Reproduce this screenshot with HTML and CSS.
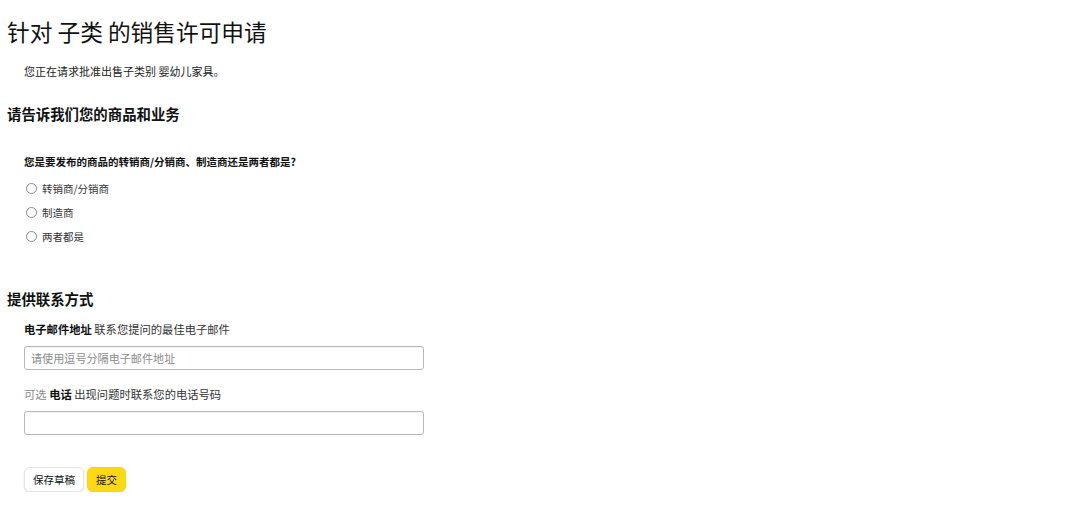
FILE: index.html
```html
<!DOCTYPE html>
<html lang="zh-CN">
<head>
<meta charset="utf-8">
<title>针对 子类 的销售许可申请</title>
<link rel="stylesheet" href="styles.css">
</head>
<body>
<main class="page">
  <h1 class="title">针对 子类 的销售许可申请</h1>
  <p class="intro">您正在请求批准出售子类别 婴幼儿家具。</p>

  <h2 class="section-title s1">请告诉我们您的商品和业务</h2>
  <div class="question">
    <p class="q-label">您是要发布的商品的转销商/分销商、制造商还是两者都是?</p>
    <label class="radio-row"><span class="radio"></span><span>转销商/分销商</span></label>
    <label class="radio-row"><span class="radio"></span><span>制造商</span></label>
    <label class="radio-row"><span class="radio"></span><span>两者都是</span></label>
  </div>

  <h2 class="section-title s2">提供联系方式</h2>
  <div class="field">
    <p class="f-label"><b>电子邮件地址</b> 联系您提问的最佳电子邮件</p>
    <div class="input"><span class="placeholder">请使用逗号分隔电子邮件地址</span></div>
  </div>
  <div class="field f2">
    <p class="f-label"><span class="muted">可选</span> <b>电话</b> 出现问题时联系您的电话号码</p>
    <div class="input"></div>
  </div>

  <div class="actions">
    <button class="btn btn-secondary">保存草稿</button>
    <button class="btn btn-primary">提交</button>
  </div>
</main>
</body>
</html>
```

FILE: styles.css
```css
* { box-sizing: border-box; }
html, body { margin: 0; padding: 0; background: #ffffff; }
body {
  font-family: "Noto Sans CJK SC", "Noto Sans", "Liberation Sans", sans-serif;
  color: #0f1111;
}
.page { padding: 18px 0 0 0; }
p, h1, h2 { margin: 0; }

.title {
  font-size: 22.7px;
  line-height: 27px;
  font-weight: 400;
  padding-left: 7px;
  color: #111;
}
.intro {
  margin-top: 18px;
  padding-left: 24px;
  font-size: 11px;
  line-height: 16px;
  color: #222;
}
.section-title {
  font-size: 14.4px;
  line-height: 20px;
  font-weight: 700;
  padding-left: 7px;
}
.s1 { margin-top: 25px; }
.s2 { margin-top: 41px; }

.question { padding-left: 24px; margin-top: 30px; }
.q-label {
  font-size: 10.5px;
  line-height: 16px;
  font-weight: 700;
  margin-bottom: 6px;
}
.radio-row {
  display: flex;
  align-items: center;
  height: 24px;
  gap: 5px;
  font-size: 10.5px;
  color: #333;
}
.radio {
  width: 11px;
  height: 11px;
  margin-left: 2px;
  border: 1px solid #8a8a8a;
  border-radius: 50%;
  background: #fff;
}

.field { padding-left: 24px; margin-top: 12px; }
.f2 { margin-top: 16px; }
.f-label {
  font-size: 11.3px;
  line-height: 16px;
  color: #333;
}
.f-label b { color: #0f1111; font-weight: 700; }
.muted { color: #8a8a8a; }
.input {
  margin-top: 9px;
  width: 400px;
  height: 24px;
  border: 1px solid #b8b8b8;
  border-radius: 3px;
  box-shadow: inset 0 1px 1px rgba(0,0,0,0.06);
  display: flex;
  align-items: center;
  padding-left: 6px;
}
.placeholder { font-size: 11.1px; color: #8c8c8c; }

.actions {
  display: flex;
  gap: 3px;
  padding-left: 24px;
  margin-top: 32px;
}
.btn {
  font-family: inherit;
  font-size: 10.5px;
  height: 25px;
  padding: 0 8px;
  border-radius: 6px;
  cursor: pointer;
  color: #0f1111;
}
.btn-secondary {
  background: #fff;
  border: 1px solid #e3e6e6;
  box-shadow: 0 1px 2px rgba(15,17,17,0.12);
}
.btn-primary {
  background: #ffd814;
  border: 1px solid #fcd200;
  box-shadow: 0 1px 2px rgba(15,17,17,0.1);
}
```
